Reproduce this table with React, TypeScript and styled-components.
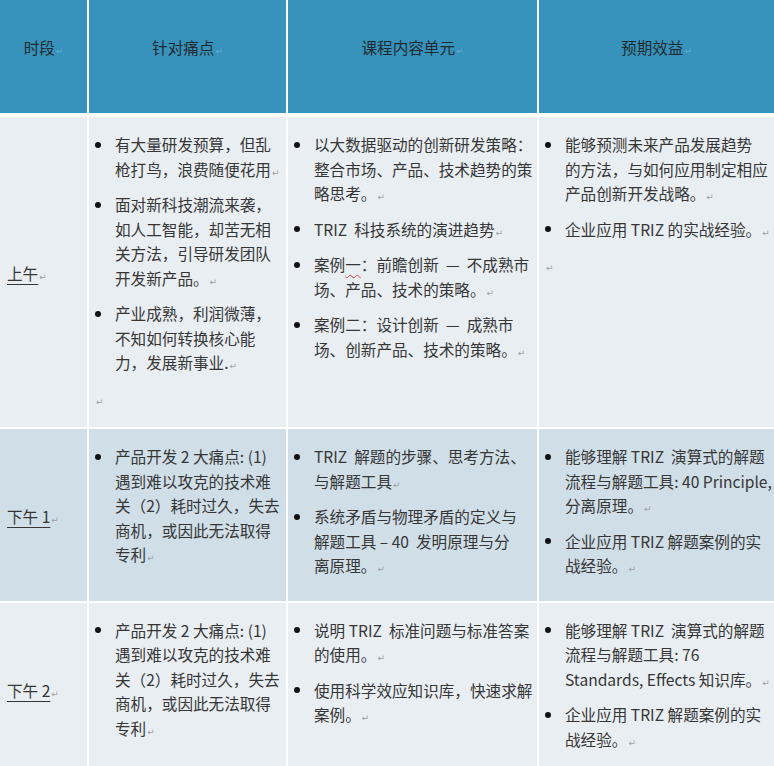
import React from 'react';
import styled, { createGlobalStyle } from 'styled-components';

const GlobalStyle = createGlobalStyle`
  html, body {
    margin: 0;
    padding: 0;
    background: #ffffff;
  }
  body {
    font-family: "Noto Sans CJK SC", "Noto Sans", sans-serif;
  }
`;

const Table = styled.table`
  width: 774px;
  border-collapse: collapse;
  table-layout: fixed;
  font-size: 15.6px;
  line-height: 24.5px;
  color: #363636;
`;

const Col = styled.col<{ $w: number }>`
  width: ${(p) => p.$w}px;
`;

const HeadCell = styled.th`
  height: 95px;
  padding: 0 0 18px;
  background: #3793bb;
  color: #1f2b31;
  font-weight: 400;
  text-align: center;
  vertical-align: middle;
  border-left: 2px solid #ffffff;
  border-bottom: 4px solid #ffffff;
  &:first-child {
    border-left: none;
  }
`;

const Row = styled.tr<{ $h: number }>`
  height: ${(p) => p.$h}px;
`;

const Cell = styled.td<{ $shade: boolean }>`
  background: ${(p) => (p.$shade ? '#d0dee8' : '#e9eef2')};
  vertical-align: top;
  padding: 15px 0 12px 6px;
  border-left: 2px solid #ffffff;
  border-top: 2px solid #ffffff;
`;

const TimeCell = styled(Cell)`
  vertical-align: middle;
  padding-left: 7px;
  border-left: none;
`;

const TimeLabel = styled.span`
  text-decoration: underline;
  text-underline-offset: 4px;
  text-decoration-thickness: 1px;
`;

const List = styled.ul`
  list-style: none;
  margin: 0;
  padding: 0;
`;

const Item = styled.li`
  position: relative;
  padding-left: 20px;
  margin-bottom: 11px;
  white-space: pre-wrap;
  &::before {
    content: '';
    position: absolute;
    left: 0;
    top: 9.5px;
    width: 6px;
    height: 6px;
    border-radius: 50%;
    background: #111111;
  }
`;

const Blank = styled.p`
  margin: 0;
  height: 24.5px;
`;

const Mark = styled.span<{ $light?: boolean }>`
  font-family: "DejaVu Sans", sans-serif;
  font-size: 9px;
  line-height: 0;
  margin-left: 1px;
  color: ${(p) => (p.$light ? 'rgba(255, 255, 255, 0.22)' : '#a0a0a0')};
`;

const Squiggle = styled.span`
  text-decoration: underline wavy #e0413a;
  text-decoration-thickness: 1px;
  text-underline-offset: 3px;
`;

type Plan = {
  time: string;
  shade: boolean;
  height: number;
  pains: React.ReactNode[];
  units: React.ReactNode[];
  benefits: React.ReactNode[];
  painsTail?: boolean;
  benefitsTail?: boolean;
};

const twoPains = '产品开发 2 大痛点: (1)\n遇到难以攻克的技术难\n关（2）耗时过久，失去\n商机，或因此无法取得\n专利';

const plans: Plan[] = [
  {
    time: '上午',
    shade: false,
    height: 313,
    pains: [
      '有大量研发预算，但乱\n枪打鸟，浪费随便花用',
      '面对新科技潮流来袭，\n如人工智能，却苦无相\n关方法，引导研发团队\n开发新产品。',
      '产业成熟，利润微薄，\n不知如何转换核心能\n力，发展新事业.',
    ],
    painsTail: true,
    units: [
      '以大数据驱动的创新研发策略：\n整合市场、产品、技术趋势的策\n略思考。',
      'TRIZ  科技系统的演进趋势',
      <>
        案例<Squiggle>一</Squiggle>：前瞻创新  —  不成熟市{'\n'}场、产品、技术的策略。
      </>,
      '案例二：设计创新  —  成熟市\n场、创新产品、技术的策略。',
    ],
    benefits: [
      '能够预测未来产品发展趋势\n的方法，与如何应用制定相应\n产品创新开发战略。',
      '企业应用 TRIZ 的实战经验。',
    ],
    benefitsTail: true,
  },
  {
    time: '下午 1',
    shade: true,
    height: 172,
    pains: [twoPains],
    units: [
      'TRIZ  解题的步骤、思考方法、\n与解题工具',
      '系统矛盾与物理矛盾的定义与\n解题工具 – 40  发明原理与分\n离原理。',
    ],
    benefits: [
      '能够理解 TRIZ  演算式的解题\n流程与解题工具: 40 Principle,\n分离原理。',
      '企业应用 TRIZ 解题案例的实\n战经验。',
    ],
  },
  {
    time: '下午 2',
    shade: false,
    height: 172,
    pains: [twoPains],
    units: [
      '说明 TRIZ  标准问题与标准答案\n的使用。',
      '使用科学效应知识库，快速求解\n案例。',
    ],
    benefits: [
      '能够理解 TRIZ  演算式的解题\n流程与解题工具: 76\nStandards, Effects 知识库。',
      '企业应用 TRIZ 解题案例的实\n战经验。',
    ],
  },
];

function Bullets({ items, tail }: { items: React.ReactNode[]; tail?: boolean }) {
  return (
    <>
      <List>
        {items.map((text, i) => (
          <Item key={i}>
            {text}
            <Mark>↵</Mark>
          </Item>
        ))}
      </List>
      {tail && (
        <Blank>
          <Mark>↵</Mark>
        </Blank>
      )}
    </>
  );
}

const headings = ['时段', '针对痛点', '课程内容单元', '预期效益'];

export default function App() {
  return (
    <>
      <GlobalStyle />
      <Table>
        <colgroup>
          <Col $w={88} />
          <Col $w={199} />
          <Col $w={251} />
          <Col $w={236} />
        </colgroup>
        <thead>
          <tr>
            {headings.map((h) => (
              <HeadCell key={h}>
                {h}
                <Mark $light>↵</Mark>
              </HeadCell>
            ))}
          </tr>
        </thead>
        <tbody>
          {plans.map((p) => (
            <Row key={p.time} $h={p.height}>
              <TimeCell $shade={p.shade}>
                <TimeLabel>{p.time}</TimeLabel>
                <Mark>↵</Mark>
              </TimeCell>
              <Cell $shade={p.shade}>
                <Bullets items={p.pains} tail={p.painsTail} />
              </Cell>
              <Cell $shade={p.shade}>
                <Bullets items={p.units} />
              </Cell>
              <Cell $shade={p.shade}>
                <Bullets items={p.benefits} tail={p.benefitsTail} />
              </Cell>
            </Row>
          ))}
        </tbody>
      </Table>
    </>
  );
}
